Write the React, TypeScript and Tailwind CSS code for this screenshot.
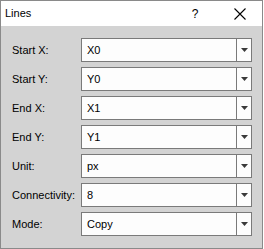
import { ReactNode } from 'react';

const rows = [
  { label: 'Start X:', value: 'X0' },
  { label: 'Start Y:', value: 'Y0' },
  { label: 'End X:', value: 'X1' },
  { label: 'End Y:', value: 'Y1' },
  { label: 'Unit:', value: 'px' },
  { label: 'Connectivity:', value: '8' },
  { label: 'Mode:', value: 'Copy' },
];

function Combo({ children }: { children: ReactNode }) {
  return (
    <div className="flex h-[24px] border border-[#7a7a7a] bg-[#fdfdfd]">
      <div className="flex flex-1 items-center pl-[5px] text-[11px] text-black">{children}</div>
      <div className="flex w-[15px] items-center justify-center border-l border-[#7a7a7a]">
        <svg width="7" height="4" viewBox="0 0 7 4">
          <polygon points="0,0 7,0 3.5,4" fill="#3a3a3a" />
        </svg>
      </div>
    </div>
  );
}

export default function App() {
  return (
    <div className="h-[249px] w-[264px] bg-white font-['Liberation_Sans',Arial,sans-serif]">
      <div className="flex h-[249px] w-[263px] flex-col border border-[#8a8a8a]">
        {/* Title bar */}
        <div className="flex h-[25px] items-center bg-white pl-[4px] pr-[10px] text-black">
          <span className="flex-1 text-[11px]">Lines</span>
          <span className="mr-[27px] w-[12px] text-center text-[12px]">?</span>
          <span className="flex w-[24px] justify-center">
            <svg width="12" height="12" viewBox="0 0 12 12">
              <path d="M0.5 0.5 L11.5 11.5 M11.5 0.5 L0.5 11.5" stroke="#000" strokeWidth="1.1" />
            </svg>
          </span>
        </div>

        {/* Form */}
        <div className="flex flex-1 flex-col gap-[5px] bg-[#d3d3d3] pb-[12px] pl-[11px] pr-[10px] pt-[12px]">
          {rows.map((r) => (
            <div key={r.label} className="grid grid-cols-[69px_1fr] items-center">
              <span className="text-[11px] text-black">{r.label}</span>
              <Combo>{r.value}</Combo>
            </div>
          ))}
        </div>
      </div>
    </div>
  );
}
